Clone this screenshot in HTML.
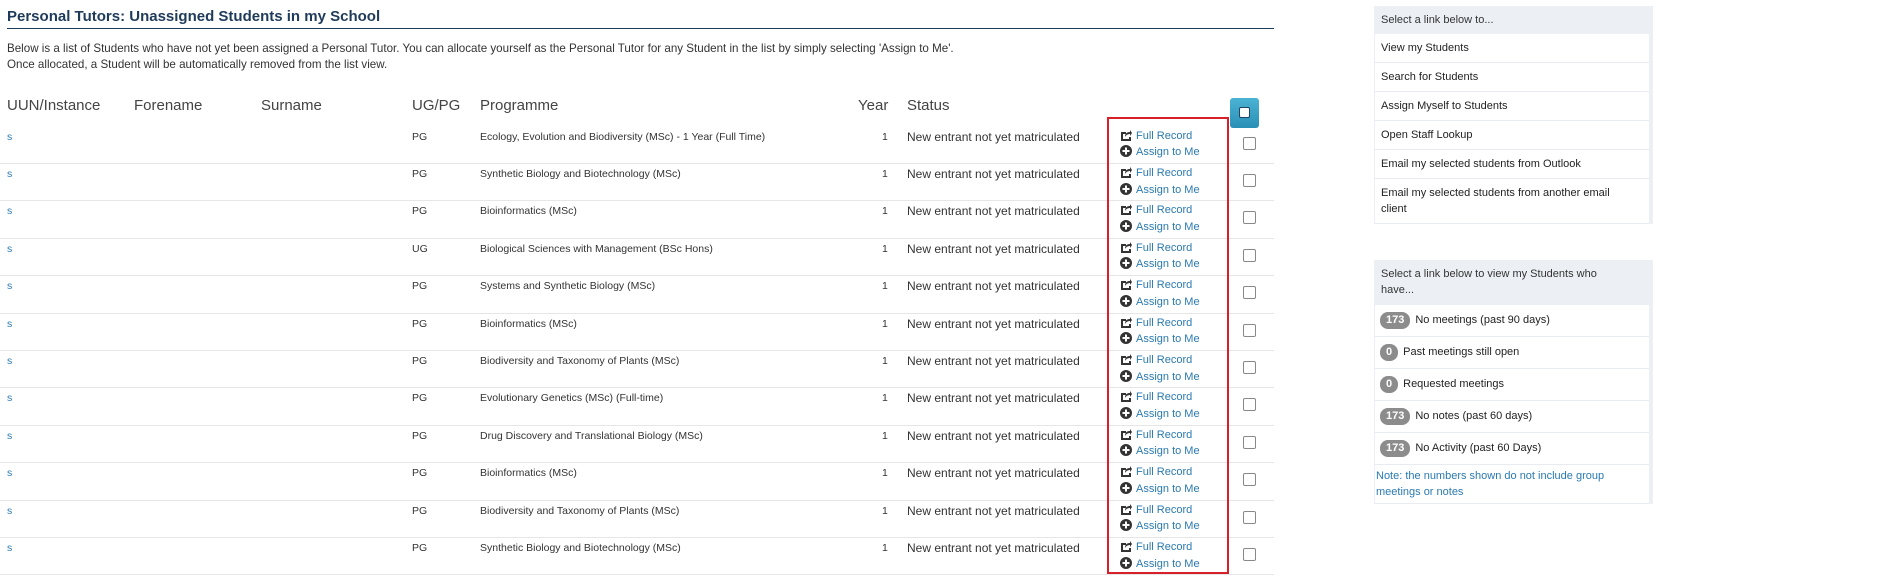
<!DOCTYPE html>
<html><head><meta charset="utf-8"><style>
*{margin:0;padding:0;box-sizing:border-box}
body{width:1889px;height:576px;background:#fff;font-family:"Liberation Sans",sans-serif;color:#333;position:relative;overflow:hidden;font-size:10.5px}
.a{position:absolute;white-space:nowrap}
.t{left:7px;top:8px;font-size:15px;font-weight:bold;color:#1f3b5a}
.ul{left:7px;top:28px;width:1267px;height:1px;background:#1f3b5a}
.h{font-size:15px;color:#444;top:97px}
.lk{color:#2a7ab0}
.row{position:absolute;left:0;width:1274px;height:37.4px;border-bottom:1px solid #e6e6e6}
.row span{position:absolute;top:4px}
.cb{position:absolute;left:1243px;top:10px;width:13px;height:13px;border:1px solid #888;border-radius:2px;background:#fff}
.box{position:absolute;left:1374px;width:279px;background:#ecf0f5}
.bh{padding:5px 7px;font-size:11px;color:#333;line-height:15px}
.it{background:#fff;margin-left:1px;margin-right:4px;border-bottom:1px solid #e8ecf0;padding:0 6px;font-size:11px;color:#222;line-height:14px}
.bd{display:inline-block;background:#8c8c8c;color:#fff;border-radius:8px;padding:1px 6px;font-weight:bold;font-size:11px;line-height:15px;margin-right:5px}
.ic{display:inline-block;width:12px;height:12px;vertical-align:-2px;margin-right:4px}
</style></head><body>
<div class="a t">Personal Tutors: Unassigned Students in my School</div>
<div class="a ul"></div>
<div class="a" style="left:7px;top:41px;line-height:16px;font-size:11.6px">Below is a list of Students who have not yet been assigned a Personal Tutor. You can allocate yourself as the Personal Tutor for any Student in the list by simply selecting 'Assign to Me'.<br>Once allocated, a Student will be automatically removed from the list view.</div>
<div class="a h" style="left:7px">UUN/Instance</div>
<div class="a h" style="left:134px">Forename</div>
<div class="a h" style="left:261px">Surname</div>
<div class="a h" style="left:412px">UG/PG</div>
<div class="a h" style="left:480px">Programme</div>
<div class="a h" style="left:858px">Year</div>
<div class="a h" style="left:907px">Status</div>
<div class="a" style="left:1230px;top:98px;width:29px;height:30px;background:linear-gradient(#4bb3d4,#2a8fb5);border-radius:3px"><div style="position:absolute;left:9px;top:9px;width:11px;height:11px;background:#fff;border-radius:2px;border:1px solid #246"></div></div>
<div id="rows"></div>
<div class="a" style="left:1107px;top:117px;width:122px;height:457px;border:2px solid #d7202a"></div>

<div class="box" style="top:6px">
<div class="bh" style="padding:7px 7px 6px">Select a link below to...</div>
<div class="it" style="padding-top:7px;padding-bottom:7px">View my Students</div>
<div class="it" style="padding-top:7px;padding-bottom:7px">Search for Students</div>
<div class="it" style="padding-top:7px;padding-bottom:7px">Assign Myself to Students</div>
<div class="it" style="padding-top:7px;padding-bottom:7px">Open Staff Lookup</div>
<div class="it" style="padding-top:7px;padding-bottom:7px">Email my selected students from Outlook</div>
<div class="it" style="padding-top:6px;padding-bottom:6px;line-height:16px">Email my selected students from another email<br>client</div>
</div>
<div class="box" style="top:260px">
<div class="bh" style="padding:6px 7px 7px;line-height:16px">Select a link below to view my Students who<br>have...</div>
<div class="it" style="padding:7px 5px"><span class="bd">173</span>No meetings (past 90 days)</div>
<div class="it" style="padding:7px 5px"><span class="bd">0</span>Past meetings still open</div>
<div class="it" style="padding:7px 5px"><span class="bd">0</span>Requested meetings</div>
<div class="it" style="padding:7px 5px"><span class="bd">173</span>No notes (past 60 days)</div>
<div class="it" style="padding:7px 5px"><span class="bd">173</span>No Activity (past 60 Days)</div>
<div class="it" style="padding:3px 1px 3px;color:#2a7ab0;line-height:16px">Note: the numbers shown do not include group<br>meetings or notes</div>
</div>
<script>
var d=[["PG","Ecology, Evolution and Biodiversity (MSc) - 1 Year (Full Time)"],["PG","Synthetic Biology and Biotechnology (MSc)"],["PG","Bioinformatics (MSc)"],["UG","Biological Sciences with Management (BSc Hons)"],["PG","Systems and Synthetic Biology (MSc)"],["PG","Bioinformatics (MSc)"],["PG","Biodiversity and Taxonomy of Plants (MSc)"],["PG","Evolutionary Genetics (MSc) (Full-time)"],["PG","Drug Discovery and Translational Biology (MSc)"],["PG","Bioinformatics (MSc)"],["PG","Biodiversity and Taxonomy of Plants (MSc)"],["PG","Synthetic Biology and Biotechnology (MSc)"]];
var i1='<svg class="ic" viewBox="0 0 12 12"><path d="M1 3h5v2H3v5h6V8h2v4H1z" fill="#333"/><path d="M5 8c0-4 2.5-5 5-5V1l2 3-2 3V5C8 5 6 6 5 8z" fill="#333"/></svg>';
var i2='<svg class="ic" viewBox="0 0 12 12"><circle cx="6" cy="6" r="6" fill="#333"/><path d="M5 2.5h2v2.5h2.5v2H7v2.5H5V7H2.5V5H5z" fill="#fff"/></svg>';
var h='';
d.forEach(function(r,i){var t=126.6+i*37.4;
h+='<div class="row" style="top:'+t+'px"><span class="lk" style="left:7px">s</span><span style="left:412px">'+r[0]+'</span><span style="left:480px">'+r[1]+'</span><span style="left:882px">1</span><span style="left:907px;font-size:12px;top:3px">New entrant not yet matriculated</span><span style="left:1120px;top:1px;line-height:16.5px;font-size:11px" class="lk">'+i1+'Full Record<br>'+i2+'Assign to Me</span><div class="cb"></div></div>';});
document.getElementById('rows').innerHTML=h;
</script>
</body></html>
